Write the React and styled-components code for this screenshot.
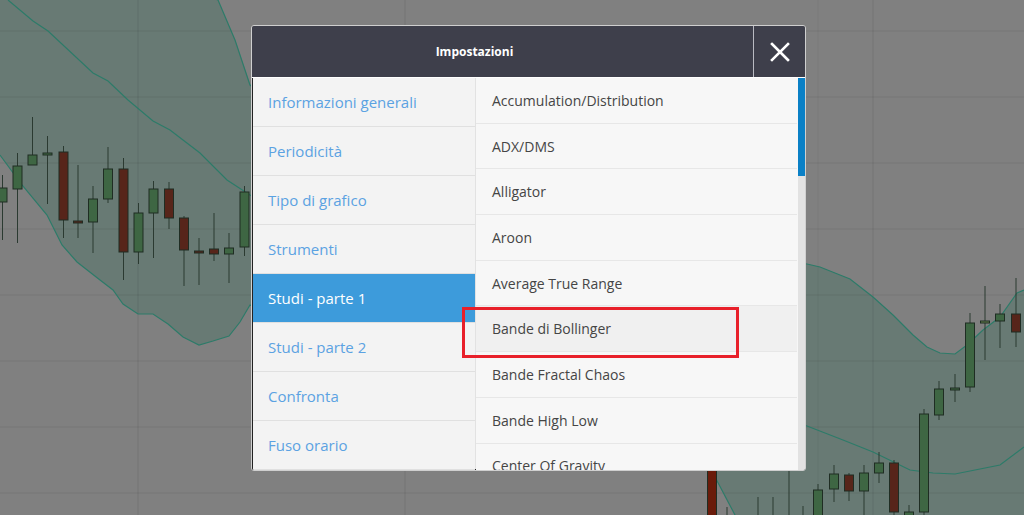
import React from 'react'
import styled, { createGlobalStyle } from 'styled-components'

const GlobalStyle = createGlobalStyle`
  html, body {
    margin: 0;
    padding: 0;
    background: #808080;
    font-family: "Open Sans", "Liberation Sans", sans-serif;
  }
`

const generalItems = [
  'Informazioni generali',
  'Periodicità',
  'Tipo di grafico',
  'Strumenti',
  'Studi - parte 1',
  'Studi - parte 2',
  'Confronta',
  'Fuso orario',
]

const studies = [
  'Accumulation/Distribution',
  'ADX/DMS',
  'Alligator',
  'Aroon',
  'Average True Range',
  'Bande di Bollinger',
  'Bande Fractal Chaos',
  'Bande High Low',
  'Center Of Gravity',
]

// x, wick top, wick bottom, body top, body bottom, kind
const candles = [
  [2.5, 175, 240, 188, 202, 'g'],
  [17.5, 153, 243, 166, 189, 'g'],
  [32.5, 117, 165, 155, 165, 'g'],
  [47.5, 136, 204, 153, 155, 'g'],
  [63.5, 146, 238, 152, 220, 'r'],
  [78, 165, 238, 221, 223, 'r'],
  [93, 186, 253, 199, 222, 'g'],
  [108, 147, 203, 169, 199, 'g'],
  [123.5, 158, 280, 169, 252, 'r'],
  [138.5, 203, 264, 213, 252, 'g'],
  [153.5, 181, 258, 189, 213, 'g'],
  [169, 182, 229, 189, 218, 'r'],
  [184, 216, 286, 218, 250, 'r'],
  [199, 238, 285, 251, 253, 'r'],
  [214, 213, 261, 249, 254, 'r'],
  [229, 233, 283, 248, 254, 'g'],
  [244.5, 186, 256, 192, 247, 'g'],
  [712, 440, 530, 470, 530, 'R'],
  [727, 507, 530, 525, 530, 'g'],
  [758, 497, 530, 525, 530, 'g'],
  [773, 497, 530, 525, 530, 'g'],
  [789, 440, 530, 525, 530, 'g'],
  [803, 506, 530, 525, 530, 'g'],
  [818, 484, 530, 490, 530, 'g'],
  [834, 465, 502, 474, 489, 'g'],
  [849, 473, 501, 475, 491, 'r'],
  [864, 465, 530, 473, 491, 'g'],
  [879, 452, 483, 463, 473, 'g'],
  [894, 460, 530, 463, 512, 'r'],
  [909, 505, 530, 512, 530, 'g'],
  [924, 409, 530, 414, 512, 'g'],
  [939, 381, 420, 389, 415, 'g'],
  [955, 374, 402, 388, 390, 'g'],
  [970, 313, 392, 323, 387, 'g'],
  [985, 286, 360, 321, 323, 'l'],
  [1000, 304, 348, 314, 321, 'g'],
  [1016, 278, 347, 314, 332, 'r'],
]

const upper = [
  [0, -80], [218, 0], [235, 40], [250, 85], [400, 190], [600, 240], [807, 264],
  [820, 267], [850, 279], [873, 297], [893, 315], [913, 335], [927, 347],
  [940, 353], [955, 354], [967, 345], [983, 330], [1000, 317], [1017, 293], [1024, 290],
]

const middle = [
  [8, 0], [33, 21], [48, 31], [93, 73], [108, 81], [128, 100], [153, 121],
  [170, 130], [183, 140], [200, 153], [227, 180], [250, 195], [500, 330],
  [807, 426], [843, 440], [873, 452], [910, 470], [933, 473], [955, 474],
  [1000, 465], [1024, 447],
]

const lower = [
  [0, 155], [22, 185], [47, 215], [62, 245], [77, 262], [100, 280], [113, 290],
  [123, 304], [138, 314], [153, 314], [168, 324], [183, 337], [199, 345],
  [213, 341], [229, 336], [240, 322], [250, 305], [400, 380], [600, 420],
  [700, 445], [715, 477], [735, 515], [745, 540],
]

const pts = (list) => list.map((p) => p.join(',')).join(' ')

const bodyColor = { g: '#3e6643', r: '#57251a', R: '#6a1b0a', l: '#647f4c' }

const Stage = styled.div`
  position: relative;
  width: 1024px;
  height: 515px;
  overflow: hidden;
  background: #808080;
`

const Chart = styled.svg`
  display: block;
  width: 1024px;
  height: 515px;
`

const Modal = styled.div`
  position: absolute;
  left: 251px;
  top: 25px;
  width: 553px;
  height: 444px;
  border: 1px solid #cfcfcf;
  border-radius: 3px;
  display: flex;
  flex-direction: column;
  overflow: hidden;
`

const Header = styled.div`
  display: flex;
  height: 51px;
  flex-shrink: 0;
  background: #3e3f4b;
  border-bottom: 1px solid #ffffff;
`

const Title = styled.div`
  flex: 1;
  display: flex;
  align-items: center;
  justify-content: center;
  padding-right: 56px;
  color: #ffffff;
  font-size: 12px;
  font-weight: 700;
`

const CloseButton = styled.div`
  width: 51px;
  display: flex;
  align-items: center;
  justify-content: center;
  border-left: 1px solid #b9bac2;
`

const Body = styled.div`
  flex: 1;
  display: flex;
  min-height: 0;
  box-shadow: inset 1px -1px 0 #222;
`

const Nav = styled.div`
  width: 222px;
  flex-shrink: 0;
  background: #f3f3f3;
  border-right: 1px solid #e2e2e2;
  margin-left: 1px;
  margin-bottom: 1px;
`

const NavItem = styled.div`
  height: 48px;
  display: flex;
  align-items: center;
  padding-left: 15px;
  font-size: 15px;
  border-bottom: 1px solid #e0e0e0;
  color: ${(p) => (p.$active ? '#ffffff' : '#5ba2e2')};
  background: ${(p) => (p.$active ? '#3d9bdb' : 'transparent')};
`

const ListArea = styled.div`
  flex: 1;
  display: flex;
  background: #f7f7f7;
  min-width: 0;
`

const List = styled.div`
  flex: 1;
  overflow: hidden;
  margin-right: 1px;
`

const Row = styled.div`
  height: 44.7px;
  display: flex;
  align-items: center;
  padding-left: 16px;
  font-size: 14px;
  color: #454545;
  border-bottom: 1px solid #e7e7e7;
  background: ${(p) => (p.$hover ? '#f0f0f0' : 'transparent')};
`

const ScrollTrack = styled.div`
  width: 7px;
  background: #e2e2e2;
  display: flex;
  flex-direction: column;
`

const ScrollThumb = styled.div`
  height: 98px;
  background: #0a80c6;
`

const Highlight = styled.div`
  position: absolute;
  left: 210px;
  top: 281px;
  width: 271px;
  height: 45px;
  border: 3px solid #e8202a;
  pointer-events: none;
`

const CloseIcon = () => (
  <svg width="20" height="20" viewBox="0 0 20 20">
    <path d="M2 2 L18 18 M18 2 L2 18" stroke="#ffffff" strokeWidth="2.6" strokeLinecap="square" fill="none" />
  </svg>
)

const CandleChart = () => (
  <Chart viewBox="0 0 1024 515">
    <rect x="0" y="0" width="1024" height="515" fill="#808080" />
    <polygon points={pts([...upper, [1024, 600], ...[...lower].reverse()])} fill="#687a74" />
    {[31, 97, 163, 229, 295, 361, 427, 493].map((y) => (
      <line key={y} x1="0" x2="1024" y1={y} y2={y} stroke="rgba(0,0,0,0.07)" strokeWidth="1" />
    ))}
    {[138, 405, 818, 873].map((x) => (
      <line key={x} x1={x} x2={x} y1="0" y2="515" stroke={x === 818 ? 'rgba(0,0,0,0.04)' : 'rgba(0,0,0,0.09)'} strokeWidth="1" />
    ))}
    {[upper, middle, lower].map((band, i) => (
      <polyline key={i} points={pts(band)} fill="none" stroke="#2d7b69" strokeWidth="1.2" />
    ))}
    {candles.map(([x, wt, wb, bt, bb, k], i) => (
      <g key={i}>
        <line x1={x} x2={x} y1={wt} y2={wb} stroke="#2b3a31" strokeWidth="1" />
        <rect x={x - 4.5} y={bt} width="9" height={Math.max(bb - bt, 2)} fill={bodyColor[k]} stroke="#1f2d23" strokeWidth="1" />
      </g>
    ))}
  </Chart>
)

export default function App() {
  return (
    <Stage>
      <GlobalStyle />
      <CandleChart />
      <Modal>
        <Header>
          <Title>Impostazioni</Title>
          <CloseButton>
            <CloseIcon />
          </CloseButton>
        </Header>
        <Body>
          <Nav>
            {generalItems.map((item) => (
              <NavItem key={item} $active={item === 'Studi - parte 1'}>{item}</NavItem>
            ))}
          </Nav>
          <ListArea>
            <List>
              {studies.map((s) => (
                <Row key={s} $hover={s === 'Bande di Bollinger'}>{s}</Row>
              ))}
            </List>
            <ScrollTrack>
              <ScrollThumb />
            </ScrollTrack>
          </ListArea>
        </Body>
        <Highlight />
      </Modal>
    </Stage>
  )
}
